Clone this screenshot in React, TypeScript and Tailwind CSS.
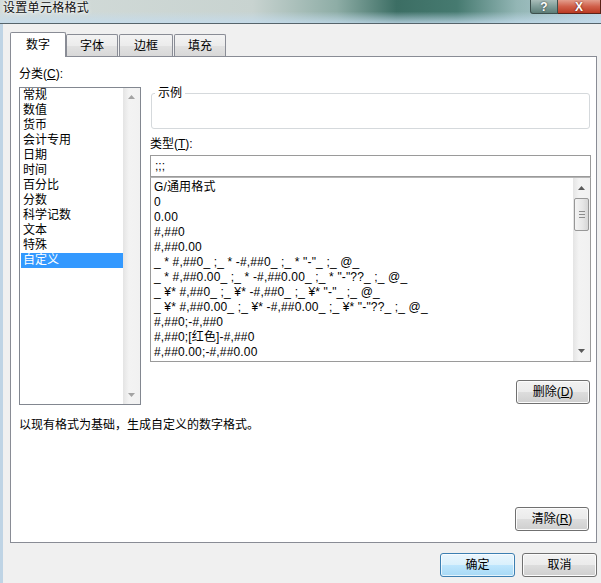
import React from 'react';

const categories = ['常规', '数值', '货币', '会计专用', '日期', '时间', '百分比', '分数', '科学记数', '文本', '特殊', '自定义'];

const formats = [
  'G/通用格式',
  '0',
  '0.00',
  '#,##0',
  '#,##0.00',
  '_ * #,##0_ ;_ * -#,##0_ ;_ * "-"_ ;_ @_',
  '_ * #,##0.00_ ;_ * -#,##0.00_ ;_ * "-"??_ ;_ @_',
  '_ ¥* #,##0_ ;_ ¥* -#,##0_ ;_ ¥* "-"_ ;_ @_',
  '_ ¥* #,##0.00_ ;_ ¥* -#,##0.00_ ;_ ¥* "-"??_ ;_ @_',
  '#,##0;-#,##0',
  '#,##0;[红色]-#,##0',
  '#,##0.00;-#,##0.00',
];

// small scrollbar arrow
function Arrow({ up, dim }: { up?: boolean; dim?: boolean }) {
  return (
    <svg width="7" height="4" viewBox="0 0 7 4">
      <polygon points={up ? '3.5,0 7,4 0,4' : '0,0 7,0 3.5,4'} fill={dim ? '#a3a3a3' : '#5a5a5a'} />
    </svg>
  );
}

function Track({ children }: { children: React.ReactNode }) {
  return (
    <div className="w-[17px] h-full flex flex-col bg-[linear-gradient(to_right,#e4e4e4,#f3f3f3_35%,#f1f1f1)]">
      {children}
    </div>
  );
}

function WinButton({ children, primary, className = '' }: { children: React.ReactNode; primary?: boolean; className?: string }) {
  return (
    <button
      className={`h-[24px] w-[74px] rounded-[3px] border flex items-center justify-center text-[12px] leading-none ${primary
        ? 'border-[#3c7fb1] bg-[linear-gradient(to_bottom,#eaf6fd,#d9f0fc_50%,#bee6fd_50%,#a7d9f5)] shadow-[inset_0_0_0_1px_#ffffffb0]'
        : 'border-[#707070] bg-[linear-gradient(to_bottom,#f2f2f2,#ebebeb_50%,#dddddd_50%,#cfcfcf)] shadow-[inset_0_0_0_1px_#fcfcfc]'
        } ${className}`}
    >
      {children}
    </button>
  );
}

export default function App() {
  return (
    <div className="w-[601px] h-[583px] overflow-hidden flex flex-col bg-[#f0f0f0] text-[12px] text-black font-['Liberation_Sans','Noto_Sans_CJK_SC',sans-serif]">
      {/* title bar */}
      <div className="h-[24px] shrink-0 flex items-start border-b border-[#56646b] bg-[linear-gradient(to_bottom,transparent_50%,rgba(196,220,238,0.8)),linear-gradient(to_right,#d4dcda_0%,#c8d3d0_42%,#8eada6_56%,#3c6e64_66%,#467a70_76%,#93b6b5_86%,#bdd3de_100%)]">
        <span className="ml-[3px] mt-[1px] leading-[14px] text-[12px] tracking-[0.3px] text-[#111] [text-shadow:0_0_5px_#fff,0_0_3px_#fff]">设置单元格格式</span>
        <div className="ml-auto flex">
          <div className="w-[28px] h-[14px] border border-t-0 border-[#3c4f4c] rounded-bl-[3px] bg-[linear-gradient(to_bottom,#a9bdb9,#7f9d98_50%,#5d7d77)] flex items-center justify-center text-[12px] font-bold leading-none text-white [text-shadow:0_0_2px_#222]">?</div>
          <div className="w-[43px] h-[14px] border border-t-0 border-l-0 border-[#5a2218] bg-[linear-gradient(to_bottom,#e39d8c,#d0604a_50%,#bb3a22)] flex items-center justify-center text-[12px] font-bold leading-none text-white [text-shadow:0_0_2px_#4a1008]">X</div>
        </div>
      </div>

      <div className="flex-1 flex flex-col border-l-[3px] border-[#bfd4e5]">
        {/* tabs */}
        <div className="relative z-10 mt-[8px] ml-[7px] flex items-end">
          <div className="w-[56px] h-[25px] bg-white border border-b-0 border-[#898c95] rounded-t-[2px] flex items-center justify-center">数字</div>
          {['字体', '边框', '填充'].map((t, i) => (
            <div
              key={t}
              className={`${i === 0 ? 'w-[52px]' : i === 1 ? 'w-[54px] ml-[1px]' : 'w-[52px] ml-[1px]'} h-[22px] mb-[1px] border border-b-0 border-[#898c95] rounded-t-[2px] bg-[linear-gradient(to_bottom,#f3f3f3,#ececec_50%,#e2e2e2_50%,#d8d8d8)] flex items-center justify-center`}
            >
              {t}
            </div>
          ))}
        </div>

        {/* tab panel */}
        <div className="-mt-[1px] ml-[7px] w-[587px] h-[487px] shrink-0 bg-white border border-[#898c95] flex flex-col pl-[8px] pr-[5px] pt-[10px]">
          <div className="leading-[15px] h-[15px]">分类(<span className="underline">C</span>):</div>

          <div className="mt-[5px] flex">
            {/* category list */}
            <div className="w-[122px] h-[318px] border border-[#828790] flex">
              <div className="flex-1 flex flex-col">
                {categories.map((c) => (
                  <div
                    key={c}
                    className={`leading-[15px] h-[15px] ml-[1px] pl-[2px] ${c === '自定义' ? 'bg-[#3399ff] text-white' : ''}`}
                  >
                    {c}
                  </div>
                ))}
              </div>
              <Track>
                <div className="h-[18px] flex items-center justify-center"><Arrow up dim /></div>
                <div className="flex-1" />
                <div className="h-[18px] flex items-center justify-center"><Arrow dim /></div>
              </Track>
            </div>

            {/* right column */}
            <div className="ml-[9px] w-[441px] flex flex-col">
              <fieldset className="mt-[1px] ml-[1px] w-[439px] border border-[#d5d9dc] rounded-[3px]">
                <legend className="ml-[3px] px-[3px] leading-[11px] text-[12px]">示例</legend>
                <div className="h-[29px]" />
              </fieldset>

              <div className="mt-[8px] leading-[15px] h-[15px]">类型(<span className="underline">T</span>):</div>

              <div className="mt-[3px] h-[22px] border border-[#9a9a9a] flex items-center pl-[4px] leading-none">;;;</div>

              <div className="h-[185px] border border-[#9a9a9a] border-t-[#b5b5b5] flex">
                <div className="flex-1 pt-[2px] pl-[3px] flex flex-col">
                  {formats.map((f) => (
                    <div key={f} className="leading-[15px] h-[15px] whitespace-pre tracking-[0.15px]">{f}</div>
                  ))}
                </div>
                <Track>
                  <div className="h-[20px] flex items-center justify-center"><Arrow up /></div>
                  <div className="mx-[1px] h-[33px] rounded-[2px] border border-[#979797] bg-[linear-gradient(to_right,#f4f4f4,#e6e6e6_60%,#d6d6d6)] flex flex-col items-center justify-center gap-[2px]">
                    <div className="w-[6px] h-px bg-[#8c8c8c]" />
                    <div className="w-[6px] h-px bg-[#8c8c8c]" />
                    <div className="w-[6px] h-px bg-[#8c8c8c]" />
                  </div>
                  <div className="flex-1" />
                  <div className="h-[20px] flex items-center justify-center"><Arrow /></div>
                </Track>
              </div>

              <WinButton className="mt-[18px] self-end mr-[1px]">
                删除(<span className="underline">D</span>)
              </WinButton>
            </div>
          </div>

          <div className="mt-[13px] leading-[15px]">以现有格式为基础，生成自定义的数字格式。</div>

          <WinButton className="mt-auto mb-[11px] self-end mr-[2px]">
            清除(<span className="underline">R</span>)
          </WinButton>
        </div>

        {/* dialog buttons */}
        <div className="mt-[10px] flex justify-end gap-[7px] pr-[4px]">
          <WinButton primary className="w-[75px]">确定</WinButton>
          <WinButton className="w-[75px]">取消</WinButton>
        </div>
      </div>
    </div>
  );
}
